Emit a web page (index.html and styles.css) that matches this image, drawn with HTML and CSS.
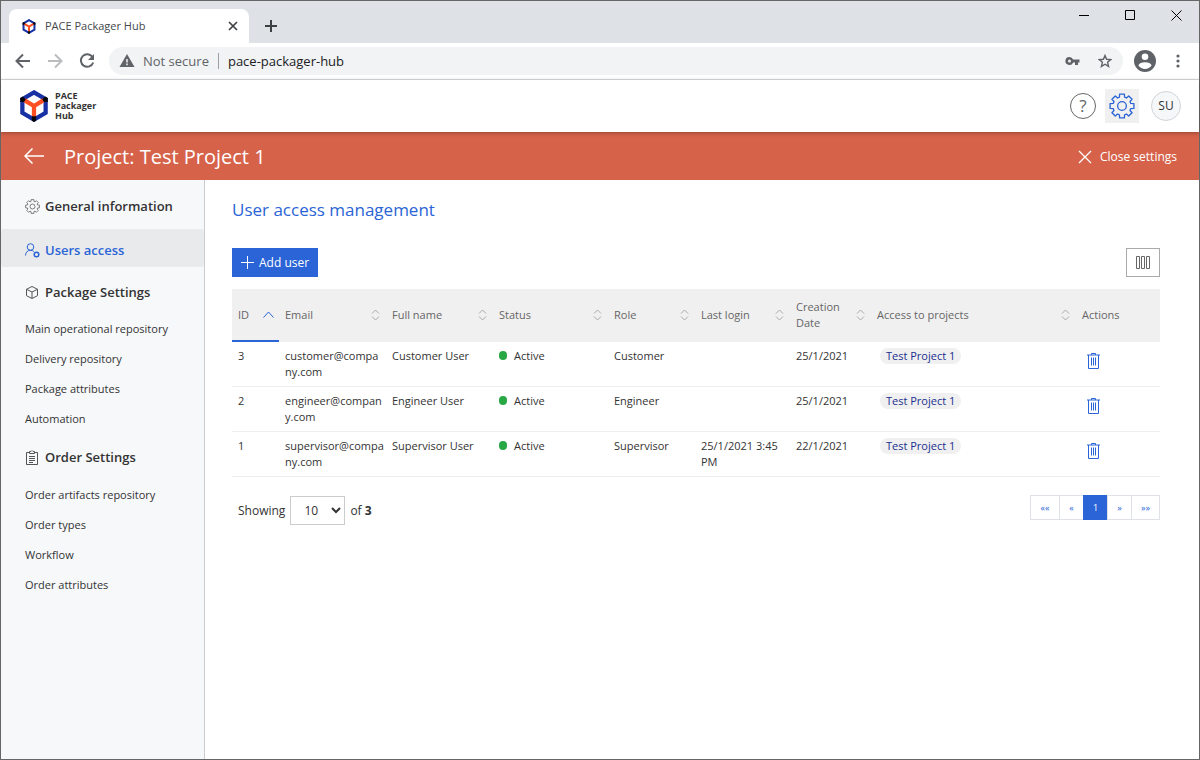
FILE: index.html
```html
<!DOCTYPE html>
<html lang="en">
<head>
<meta charset="utf-8">
<title>PACE Packager Hub</title>
<link rel="stylesheet" href="styles.css">
</head>
<body>
<svg class="defs" aria-hidden="true">
  <symbol id="cube" viewBox="0 0 30 33">
    <path d="M15 2.500 27 9.500V23.500L15 30.500 3 23.500V9.500Z" fill="none" stroke="#1730a3" stroke-width="4.400"/>
    <path d="M5 10.500 15 16.500 25 10.500M15 16V28" fill="none" stroke="#ff5023" stroke-width="4.400"/>
    <path d="M.8 8.200 3.500 6.800 6.500 9.500 4.800 12.500.8 12.500ZM29.200 8.200 26.500 6.800 23.500 9.500 25.200 12.500 29.200 12.500ZM12.800 27H17.200V31.600L15 33 12.800 31.600Z" fill="#05050a"/>
  </symbol>
  <symbol id="gear" viewBox="0 0 24 24">
    <path d="M9.800 1H14.200L14.400 3.900 16.100 4.600 18.200 2.700 21.300 5.800 19.400 7.900 20.100 9.600 23 9.800V14.200L20.100 14.400 19.400 16.100 21.300 18.200 18.200 21.300 16.100 19.400 14.400 20.100 14.200 23H9.800L9.600 20.100 7.900 19.400 5.800 21.300 2.700 18.200 4.600 16.100 3.900 14.400 1 14.200V9.800L3.900 9.600 4.600 7.900 2.700 5.800 5.800 2.700 7.900 4.600 9.600 3.900Z" fill="none" stroke="currentColor" stroke-width="1.200" stroke-linejoin="round"/>
    <circle cx="12" cy="12" r="4" fill="none" stroke="currentColor" stroke-width="1.200"/>
  </symbol>
  <symbol id="sort" viewBox="0 0 9 12">
    <path d="M1 4.500 4.500 1 8 4.500M1 7.500 4.500 11 8 7.500" fill="none" stroke="#aaa"/>
  </symbol>
  <symbol id="trash" viewBox="0 0 13 17">
    <path d="M0 3H13M4.500 3V1.500H8.500V3M1.500 3V16.500H11.500V3M4.500 5.500V13.500M6.500 5.500V13.500M8.500 5.500V13.500" fill="none" stroke="currentColor"/>
  </symbol>
</svg>

<div class="window">
  <div class="tabstrip">
    <div class="tab">
      <svg class="tab-logo"><use href="#cube"/></svg>
      <span class="tab-title">PACE Packager Hub</span>
      <button class="plain" aria-label="Close tab"><svg width="10" height="10" viewBox="0 0 10 10"><path d="M1 1 9 9M9 1 1 9" stroke="#3c4043" stroke-width="1.700"/></svg></button>
    </div>
    <button class="plain new-tab" aria-label="New tab"><svg width="12" height="12" viewBox="0 0 12 12"><path d="M6 0V12M0 6H12" stroke="#3c4043" stroke-width="2"/></svg></button>
    <div class="window-controls">
      <button class="plain" aria-label="Minimize"><svg width="11" height="11" viewBox="0 0 11 11"><path d="M0 5.500H10" stroke="#000"/></svg></button>
      <button class="plain" aria-label="Maximize"><svg width="11" height="11" viewBox="0 0 11 11"><path d="M.5.500H9.500V9.500H.5Z" fill="none" stroke="#000"/></svg></button>
      <button class="plain" aria-label="Close"><svg width="11" height="11" viewBox="0 0 11 11"><path d="M.5.500 10.500 10.500M10.500.5.500 10.500" stroke="#000"/></svg></button>
    </div>
  </div>

  <div class="toolbar">
    <button class="plain" aria-label="Back"><svg width="16" height="16" viewBox="0 0 16 16"><path d="M15 8H2M8 1.500 1.500 8 8 14.500" fill="none" stroke="#5f6368" stroke-width="2"/></svg></button>
    <button class="plain" aria-label="Forward"><svg width="16" height="16" viewBox="0 0 16 16"><path d="M1 8H14M8 1.500 14.500 8 8 14.500" fill="none" stroke="#babcbe" stroke-width="2"/></svg></button>
    <button class="plain" aria-label="Reload"><svg width="16" height="16" viewBox="0 0 16 16"><path d="M13.500 4A6.300 6.300 0 1 0 14.200 9.500" fill="none" stroke="#5f6368" stroke-width="2"/><path d="M15 1V7H9Z" fill="#5f6368"/></svg></button>
    <div class="omnibox">
      <svg width="16" height="14" viewBox="0 0 16 14"><path d="M8 0 15.500 13H.5Z" fill="#5f6368"/><path d="M8 5V8.500M8 9.500V11.300" stroke="#f1f3f4" stroke-width="1.500"/></svg>
      <span class="insecure">Not secure</span>
      <input class="address" aria-label="Address" value="pace-packager-hub">
      <button class="plain" aria-label="Saved password"><svg width="16" height="10" viewBox="0 0 16 10"><path d="M4.500 1a4 4 0 1 0 3.600 5.500H10V9h3V6.500h1.500v-3H8.100A4 4 0 0 0 4.500 1Zm0 2.500a1.500 1.500 0 1 1 0 3 1.500 1.500 0 0 1 0-3Z" fill="#5f6368" fill-rule="evenodd"/></svg></button>
      <button class="plain" aria-label="Bookmark"><svg width="14" height="14" viewBox="0 0 14 14"><path d="M7 1.500 8.600 5.300 12.700 5.600 9.600 8.300 10.600 12.400 7 10.200 3.400 12.400 4.400 8.300 1.300 5.600 5.400 5.300Z" fill="none" stroke="#5f6368" stroke-width="1.400"/></svg></button>
    </div>
    <button class="plain" aria-label="Profile"><svg width="22" height="22" viewBox="0 0 22 22"><circle cx="11" cy="11" r="11" fill="#5f6368"/><circle cx="11" cy="6.700" r="3.300" fill="#fff"/><path d="M4.400 15.500C5.500 11.300 16.500 11.300 17.600 15.500 14.500 20 7.500 20 4.400 15.500Z" fill="#fff"/></svg></button>
    <button class="plain menu" aria-label="Menu"><svg width="4" height="14" viewBox="0 0 4 14"><g fill="#5f6368"><circle cx="2" cy="2" r="1.600"/><circle cx="2" cy="7" r="1.600"/><circle cx="2" cy="12" r="1.600"/></g></svg></button>
  </div>

  <header class="app-header">
    <a class="brand" href="#"><svg class="brand-logo"><use href="#cube"/></svg><span>PACE<br>Packager<br>Hub</span></a>
    <button class="plain round help" aria-label="Help">?</button>
    <button class="plain settings" aria-label="Settings"><svg width="26" height="26"><use href="#gear"/></svg></button>
    <button class="plain round user">SU</button>
  </header>

  <div class="project-bar">
    <a class="back" href="#" aria-label="Back to projects"><svg width="20" height="16" viewBox="0 0 20 16"><path d="M20 8H1M8.500.5 1 8 8.500 15.500" fill="none" stroke="#fff" stroke-width="1.500"/></svg></a>
    <h1>Project: Test Project 1</h1>
    <button class="plain close"><svg width="14" height="14" viewBox="0 0 14 14"><path d="M1 1 13 13M13 1 1 13" stroke="#fff" stroke-width="1.300"/></svg>Close settings</button>
  </div>

  <div class="body">
    <nav class="sidebar">
      <a class="section" href="#"><svg width="15" height="15"><use href="#gear"/></svg>General information</a>
      <a class="section active" href="#"><svg width="15" height="15" viewBox="0 0 15 15"><g fill="none" stroke="currentColor"><circle cx="5.500" cy="4" r="3.300"/><path d="M.5 12.500C.5 9.500 2.500 7.300 5.500 7.300 7 7.300 8 7.800 8.800 8.600"/><circle cx="11.500" cy="11.500" r="2.300" stroke-width="1.500"/></g></svg>Users access</a>
      <h2 class="section"><svg width="15" height="15" viewBox="0 0 15 15"><path d="M7 1.500 12.500 4.300V10.700L7 13.500 1.500 10.700V4.300ZM1.500 4.300 7 7 12.500 4.300M7 7V13.500" fill="none" stroke="currentColor"/></svg>Package Settings</h2>
      <ul>
        <li><a href="#">Main operational repository</a></li>
        <li><a href="#">Delivery repository</a></li>
        <li><a href="#">Package attributes</a></li>
        <li><a href="#">Automation</a></li>
      </ul>
      <h2 class="section"><svg width="15" height="15" viewBox="0 0 15 15"><path d="M4.500 2.500H1.500V14.500H12.500V2.500H9.500M4.500 3.500V1.500H6L7 .5 8 1.500H9.500V3.500ZM4 6.500H10M4 8.500H10M4 10.500H10M4 12.500H8" fill="none" stroke="currentColor"/></svg>Order Settings</h2>
      <ul>
        <li><a href="#">Order artifacts repository</a></li>
        <li><a href="#">Order types</a></li>
        <li><a href="#">Workflow</a></li>
        <li><a href="#">Order attributes</a></li>
      </ul>
    </nav>

    <main>
      <h2 class="title">User access management</h2>
      <div class="actions">
        <button class="add"><svg width="13" height="13" viewBox="0 0 13 13"><path d="M6.500 0V13M0 6.500H13" stroke="#fff"/></svg>Add user</button>
        <button class="columns" aria-label="Choose columns"><svg width="15" height="13" viewBox="0 0 15 13"><path d="M.5.500H3.500V12.500H.5ZM5.500.500H8.500V12.500H5.500ZM10.500.500H13.500V12.500H10.500Z" fill="none" stroke="#666"/></svg></button>
      </div>
      <table>
        <colgroup><col class="c-id"><col class="c-name"><col class="c-name"><col class="c-status"><col class="c-role"><col class="c-login"><col class="c-date"><col><col class="c-actions"></colgroup>
        <thead>
          <tr>
            <th class="sorted"><button class="plain sort">ID<svg width="11" height="7" viewBox="0 0 11 7"><path d="M.5 6.500 5.500 1 10.500 6.500" fill="none" stroke="#2a64d6"/></svg></button></th>
            <th><button class="plain sort">Email<svg width="9" height="12"><use href="#sort"/></svg></button></th>
            <th><button class="plain sort">Full name<svg width="9" height="12"><use href="#sort"/></svg></button></th>
            <th><button class="plain sort">Status<svg width="9" height="12"><use href="#sort"/></svg></button></th>
            <th><button class="plain sort">Role<svg width="9" height="12"><use href="#sort"/></svg></button></th>
            <th><button class="plain sort">Last login<svg width="9" height="12"><use href="#sort"/></svg></button></th>
            <th><button class="plain sort">Creation<br>Date<svg width="9" height="12"><use href="#sort"/></svg></button></th>
            <th><button class="plain sort">Access to projects<svg width="9" height="12"><use href="#sort"/></svg></button></th>
            <th>Actions</th>
          </tr>
        </thead>
        <tbody>
          <tr><td>3</td><td>customer@compa<wbr>ny.com</td><td>Customer User</td><td><span class="dot"></span>Active</td><td>Customer</td><td></td><td>25/1/2021</td><td><span class="chip">Test Project 1</span></td><td><button class="plain delete" aria-label="Delete user"><svg width="13" height="17"><use href="#trash"/></svg></button></td></tr>
          <tr><td>2</td><td>engineer@compan<wbr>y.com</td><td>Engineer User</td><td><span class="dot"></span>Active</td><td>Engineer</td><td></td><td>25/1/2021</td><td><span class="chip">Test Project 1</span></td><td><button class="plain delete" aria-label="Delete user"><svg width="13" height="17"><use href="#trash"/></svg></button></td></tr>
          <tr><td>1</td><td>supervisor@compa<wbr>ny.com</td><td>Supervisor User</td><td><span class="dot"></span>Active</td><td>Supervisor</td><td>25/1/2021 3:45 PM</td><td>22/1/2021</td><td><span class="chip">Test Project 1</span></td><td><button class="plain delete" aria-label="Delete user"><svg width="13" height="17"><use href="#trash"/></svg></button></td></tr>
        </tbody>
      </table>
      <div class="table-footer">
        <label for="page-size">Showing</label>
        <select id="page-size"><option>10</option><option>25</option></select>
        <span>of <b>3</b></span>
        <div class="pager">
          <button class="wide" aria-label="First page">««</button><button aria-label="Previous page">«</button><button class="current">1</button><button aria-label="Next page">»</button><button class="wide" aria-label="Last page">»»</button>
        </div>
      </div>
    </main>
  </div>
</div>
</body>
</html>
```
FILE: styles.css
```css
* { box-sizing: border-box; }
body { margin: 0; font: 12px/16px "Segoe UI", "Open Sans", "Noto Sans", sans-serif; color: #333; }
svg { display: block; flex: none; }
h1, h2, ul { margin: 0; padding: 0; font-weight: 400; }
ul { list-style: none; }
a { color: inherit; text-decoration: none; }
button, input, select { font: inherit; color: inherit; }
.defs { position: absolute; width: 0; height: 0; }
.plain { display: flex; align-items: center; justify-content: center; padding: 0; border: 0; background: none; }

.window { display: flex; flex-direction: column; min-height: 100vh; border: 1px solid #666; background: #fff; }
.tabstrip { display: flex; height: 42px; padding: 8px 17px 0 8px; background: #dee1e6; }
.tab { display: flex; align-items: center; width: 240px; padding: 0 11px 0 13px; border-radius: 8px 8px 0 0; background: #fff; }
.tab-logo { width: 14px; height: 15px; }
.tab-title { flex: 1; margin-left: 9px; font-size: 11px; color: #45494d; }
.new-tab { width: 44px; }
.window-controls { display: flex; gap: 35px; height: 12px; margin-left: auto; }

.toolbar { display: flex; align-items: center; height: 37px; padding: 0 15px 0 14px; gap: 16px; border-bottom: 1px solid #dadce0; }
.omnibox { display: flex; flex: 1; align-items: center; height: 28px; margin: 0 -5px 0 -2px; padding: 0 11px 0 10px; border-radius: 14px; background: #f1f3f4; font-size: 13px; }
.insecure { margin: 0 9px 0 8px; color: #5f6368; }
.address { flex: 1; height: 16px; padding: 0 0 0 9px; border: 0; border-left: 1px solid #9aa0a6; background: none; color: #202124; }
.omnibox .plain + .plain { margin-left: 17px; }
.menu { width: 12px; }

.app-header { display: flex; align-items: center; height: 52px; padding: 0 18px; position: relative; box-shadow: 0 1px 4px rgba(0, 0, 0, .3); }
.brand { display: flex; align-items: center; gap: 6px; margin-right: auto; font-size: 9px; font-weight: 700; line-height: 10px; }
.brand-logo { width: 30px; height: 32px; }
.round { border: 1px solid #666; border-radius: 50%; }
.help { width: 26px; height: 26px; font-size: 17px; color: #666; }
.settings { width: 34px; height: 34px; margin: 0 12px 0 9px; background: #f0f0f0; color: #2a64d6; }
.user { width: 30px; height: 30px; border-color: #d0d4d8; background: #f6f7f9; }

.project-bar { display: flex; align-items: center; height: 48px; padding: 0 22px 0 23px; background: #d6624a; color: #fff; }
.project-bar h1 { margin: 0 auto 0 20px; padding-top: 2px; font-size: 20px; line-height: 28px; }
.close { gap: 8px; padding-top: 2px; }

.body { display: flex; flex: 1; }
.sidebar { flex: none; width: 204px; padding-top: 7px; border-right: 1px solid #ccc; background: #f7f8fa; }
.section { display: flex; align-items: center; gap: 5px; height: 38px; padding-left: 24px; font-size: 13px; font-weight: 600; }
.section svg { color: #555; }
.active { margin: 4px 0 6px; padding-top: 4px; border-radius: 3px; background: #e9eaec; color: #2a64d6; }
.active svg { color: #2a64d6; }
.sidebar ul { padding: 3px 24px; font-size: 11px; }
.sidebar ul + .section { margin: 1px 0; }
.sidebar li a { display: block; padding: 7px 0; }

main { flex: 1; min-width: 0; padding: 18px 39px 0 27px; }
.title { font-size: 17px; line-height: 24px; color: #2a64d6; }
.actions { display: flex; justify-content: space-between; margin: 26px 0 12px; }
.add { display: flex; align-items: center; gap: 5px; height: 29px; padding: 0 9px; border: 0; background: #2a64d6; color: #fff; }
.columns { display: flex; align-items: center; justify-content: center; width: 34px; height: 29px; padding: 0; border: 1px solid #aaa; background: #fff; }

table { width: 100%; table-layout: fixed; border-spacing: 0; font-size: 11px; }
.c-id { width: 47px; }
.c-name { width: 107px; }
.c-status { width: 115px; }
.c-role { width: 87px; }
.c-login { width: 95px; }
.c-date { width: 81px; }
.c-actions { width: 84px; }
th { height: 53px; padding: 0 6px 2px; background: #f0f0f0; color: #666; font-weight: 400; text-align: left; }
.sorted { padding: 0 5px 0 6px; border-bottom: 2px solid #2a64d6; }
.sort { width: 100%; justify-content: flex-start; text-align: left; }
.sort svg { margin-left: auto; }
td { padding: 6px; border-bottom: 1px solid #eee; vertical-align: top; }
.dot { display: inline-block; width: 8px; height: 9px; margin-right: 7px; border-radius: 4px; background: #28a745; }
.chip { display: inline-block; margin-left: 3px; padding: 0 6px; border-radius: 8px; background: #f0f0f0; color: #1a2f8f; }
.delete { margin: 4px 0 0 5px; color: #2a64d6; }

.table-footer { display: flex; align-items: center; gap: 5px; padding: 18px 0 0 6px; }
select { width: 55px; height: 29px; padding: 0 0 0 9px; border: 1px solid #ccc; border-radius: 0; background: #fff; }
.pager { display: flex; height: 25px; margin: 0 0 6px auto; border: 1px solid #dee2e6; }
.pager button { width: 24px; padding: 0; border: 0; border-left: 1px solid #dee2e6; background: #fff; color: #2a64d6; font-size: 9px; }
.pager .wide { width: 28px; }
.pager button:first-child { border-left: 0; }
.pager .current { margin: -1px 0; border-color: #2a64d6; background: #2a64d6; color: #fff; }
```
